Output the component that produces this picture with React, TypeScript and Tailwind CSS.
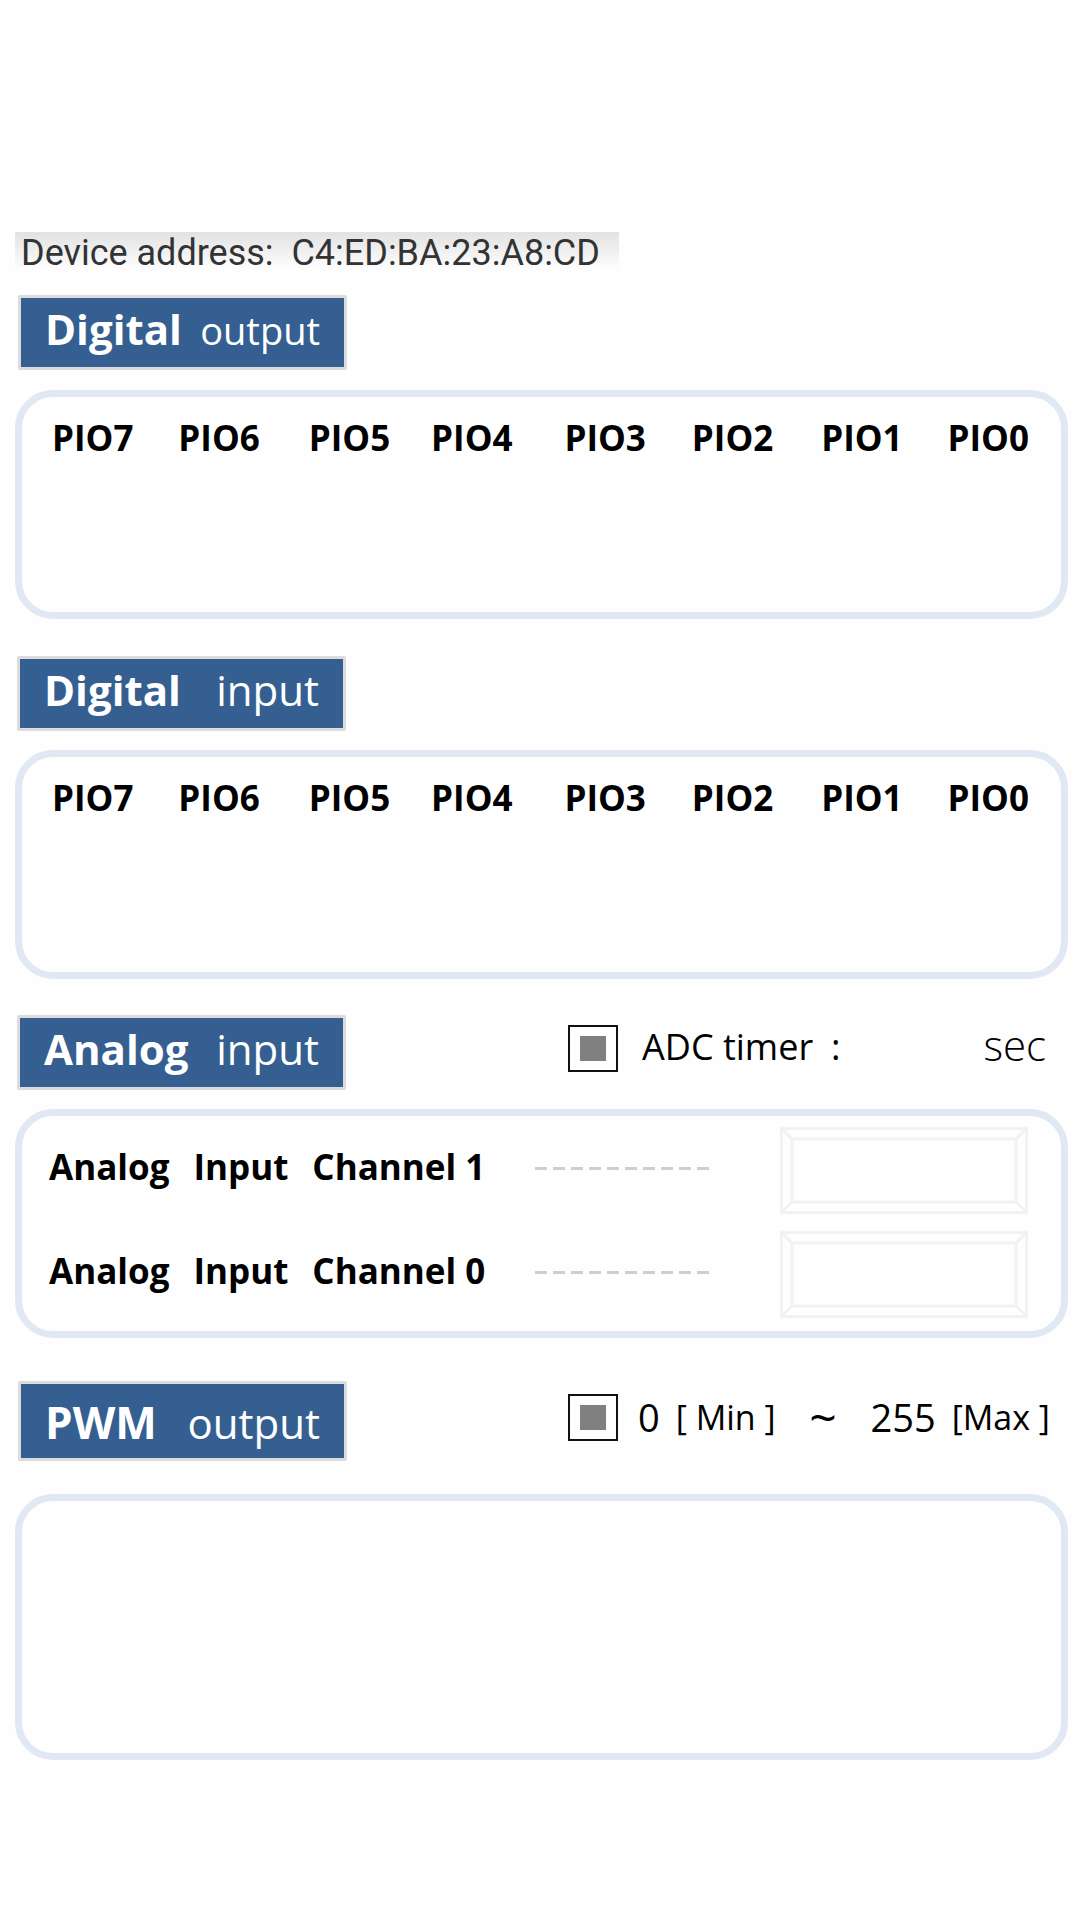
import type { ReactNode } from "react";

const PINS = ["PIO7", "PIO6", "PIO5", "PIO4", "PIO3", "PIO2", "PIO1", "PIO0"];

function Badge({ strong, light, size, tall }: { strong: string; light: string; size: "small" | "large"; tall?: boolean }) {
  return (
    <h2
      className={`flex w-[329px] items-baseline justify-between rounded-[2px] border-[3px] border-[#dcdcdc] bg-[#365f91] pr-6 pl-6 leading-[56px] text-white ${tall ? "h-20 pt-[10px]" : "h-[75px] pt-[3px]"}`}
    >
      <span className={tall ? "text-[44px] font-bold" : "text-[42px] font-bold"}>{strong}</span>
      <span className={size === "large" ? "text-[42px]" : "text-[38px]"}>{light}</span>
    </h2>
  );
}

function Panel({ children, className = "" }: { children?: ReactNode; className?: string }) {
  return (
    <div className={`rounded-[38px] border-7 border-[#dfe8f3] ${className}`}>{children}</div>
  );
}

function PinRow() {
  return (
    <ul className="grid grid-cols-[126fr_130fr_122fr_133fr_127fr_129fr_126fr_80fr] pr-8 pl-[30px] text-[35px] leading-[42px] font-bold text-black">
      {PINS.map((pin) => (
        <li key={pin}>{pin}</li>
      ))}
    </ul>
  );
}

function Tick({ id }: { id: string }) {
  return (
    <input
      id={id}
      type="checkbox"
      defaultChecked
      className="h-[47px] w-[50px] shrink-0 appearance-none border-2 border-[#111] bg-clip-content px-[10px] py-[9px] checked:bg-[#808080]"
    />
  );
}

function Reading({ channel }: { channel: number }) {
  const id = `channel-${channel}`;
  return (
    <div className="flex items-center">
      <label htmlFor={id} className="flex w-[486px] shrink-0 gap-6 pb-2 text-[35px] leading-none font-bold text-black">
        <span>Analog</span>
        <span>Input</span>
        <span>Channel {channel}</span>
      </label>
      <svg className="mb-1 h-[3px] w-[176px] shrink-0" viewBox="0 0 176 3" aria-hidden="true">
        <path d="M0 1.5H176" stroke="#cfcfcf" strokeWidth="3" strokeDasharray="12 6" />
      </svg>
      <div className="relative ml-auto h-[87px] w-[248px]">
        <input
          id={id}
          readOnly
          className="h-full w-full border-[3px] border-[#f2f2f2] bg-transparent px-4 text-center text-[35px] outline-none"
        />
        <svg className="pointer-events-none absolute inset-0" width="248" height="87" fill="none" stroke="#f2f2f2" strokeWidth="3" aria-hidden="true">
          <path d="M12 12H236V75H12ZM2 2L12 12M246 2L236 12M2 85L12 75M246 85L236 75" />
        </svg>
      </div>
    </div>
  );
}

export default function App() {
  return (
    <main className="min-h-screen bg-[#fefefe] pt-[232px] pr-3 pb-10 pl-[15px] font-['Open_Sans',sans-serif] text-black">
      <p className="w-[604px] bg-linear-to-b from-[#e2e2e2] to-[#fefefe] to-90% pl-[6px] font-[Roboto,sans-serif] text-[36px] leading-[42px] whitespace-pre text-[#333]">
        {"Device address:  C4:ED:BA:23:A8:CD"}
      </p>

      <section className="mt-[21px]">
        <div className="pl-[3px]">
          <Badge strong="Digital" light="output" size="small" />
        </div>
        <Panel className="mt-5 h-[229px] pt-5">
          <PinRow />
        </Panel>
      </section>

      <section className="mt-[37px]">
        <div className="pl-[2px]">
          <Badge strong="Digital" light="input" size="large" />
        </div>
        <Panel className="mt-[19px] h-[229px] pt-5">
          <PinRow />
        </Panel>
      </section>

      <section className="mt-9">
        <div className="flex items-center pl-[2px]">
          <Badge strong="Analog" light="input" size="large" />
          <div className="ml-auto flex w-[500px] items-center pb-2">
            <Tick id="adc" />
            <label htmlFor="adc" className="ml-6 flex gap-[18px] pb-1 text-[36px] leading-none whitespace-nowrap">
              <span>ADC timer</span>
              <span>:</span>
            </label>
            <input aria-label="ADC timer seconds" className="h-12 min-w-0 flex-1 bg-transparent text-[36px] outline-none" />
            <span className="mr-[22px] pb-2 text-[42px] leading-none font-light">sec</span>
          </div>
        </div>
        <Panel className="mt-[19px] flex h-[229px] flex-col gap-[17px] pt-[11px] pr-[33px] pl-[27px]">
          <Reading channel={1} />
          <Reading channel={0} />
        </Panel>
      </section>

      <section className="mt-[43px]">
        <div className="flex items-center pl-[3px]">
          <Badge strong="PWM" light="output" size="large" tall />
          <div className="ml-auto flex w-[500px] items-center pb-2">
            <Tick id="pwm" />
            <label htmlFor="pwm" className="ml-5 flex flex-1 items-center justify-between pr-[18px] leading-none">
              <span className="flex items-center gap-4">
                <span className="text-[38px]">0</span>
                <span className="text-[34px]">[ Min ]</span>
              </span>
              <span className="text-[48px]">~</span>
              <span className="flex items-center gap-4">
                <span className="text-[38px]">255</span>
                <span className="text-[34px]">[Max ]</span>
              </span>
            </label>
          </div>
        </div>
        <Panel className="mt-[33px] h-[266px]" />
      </section>
    </main>
  );
}
